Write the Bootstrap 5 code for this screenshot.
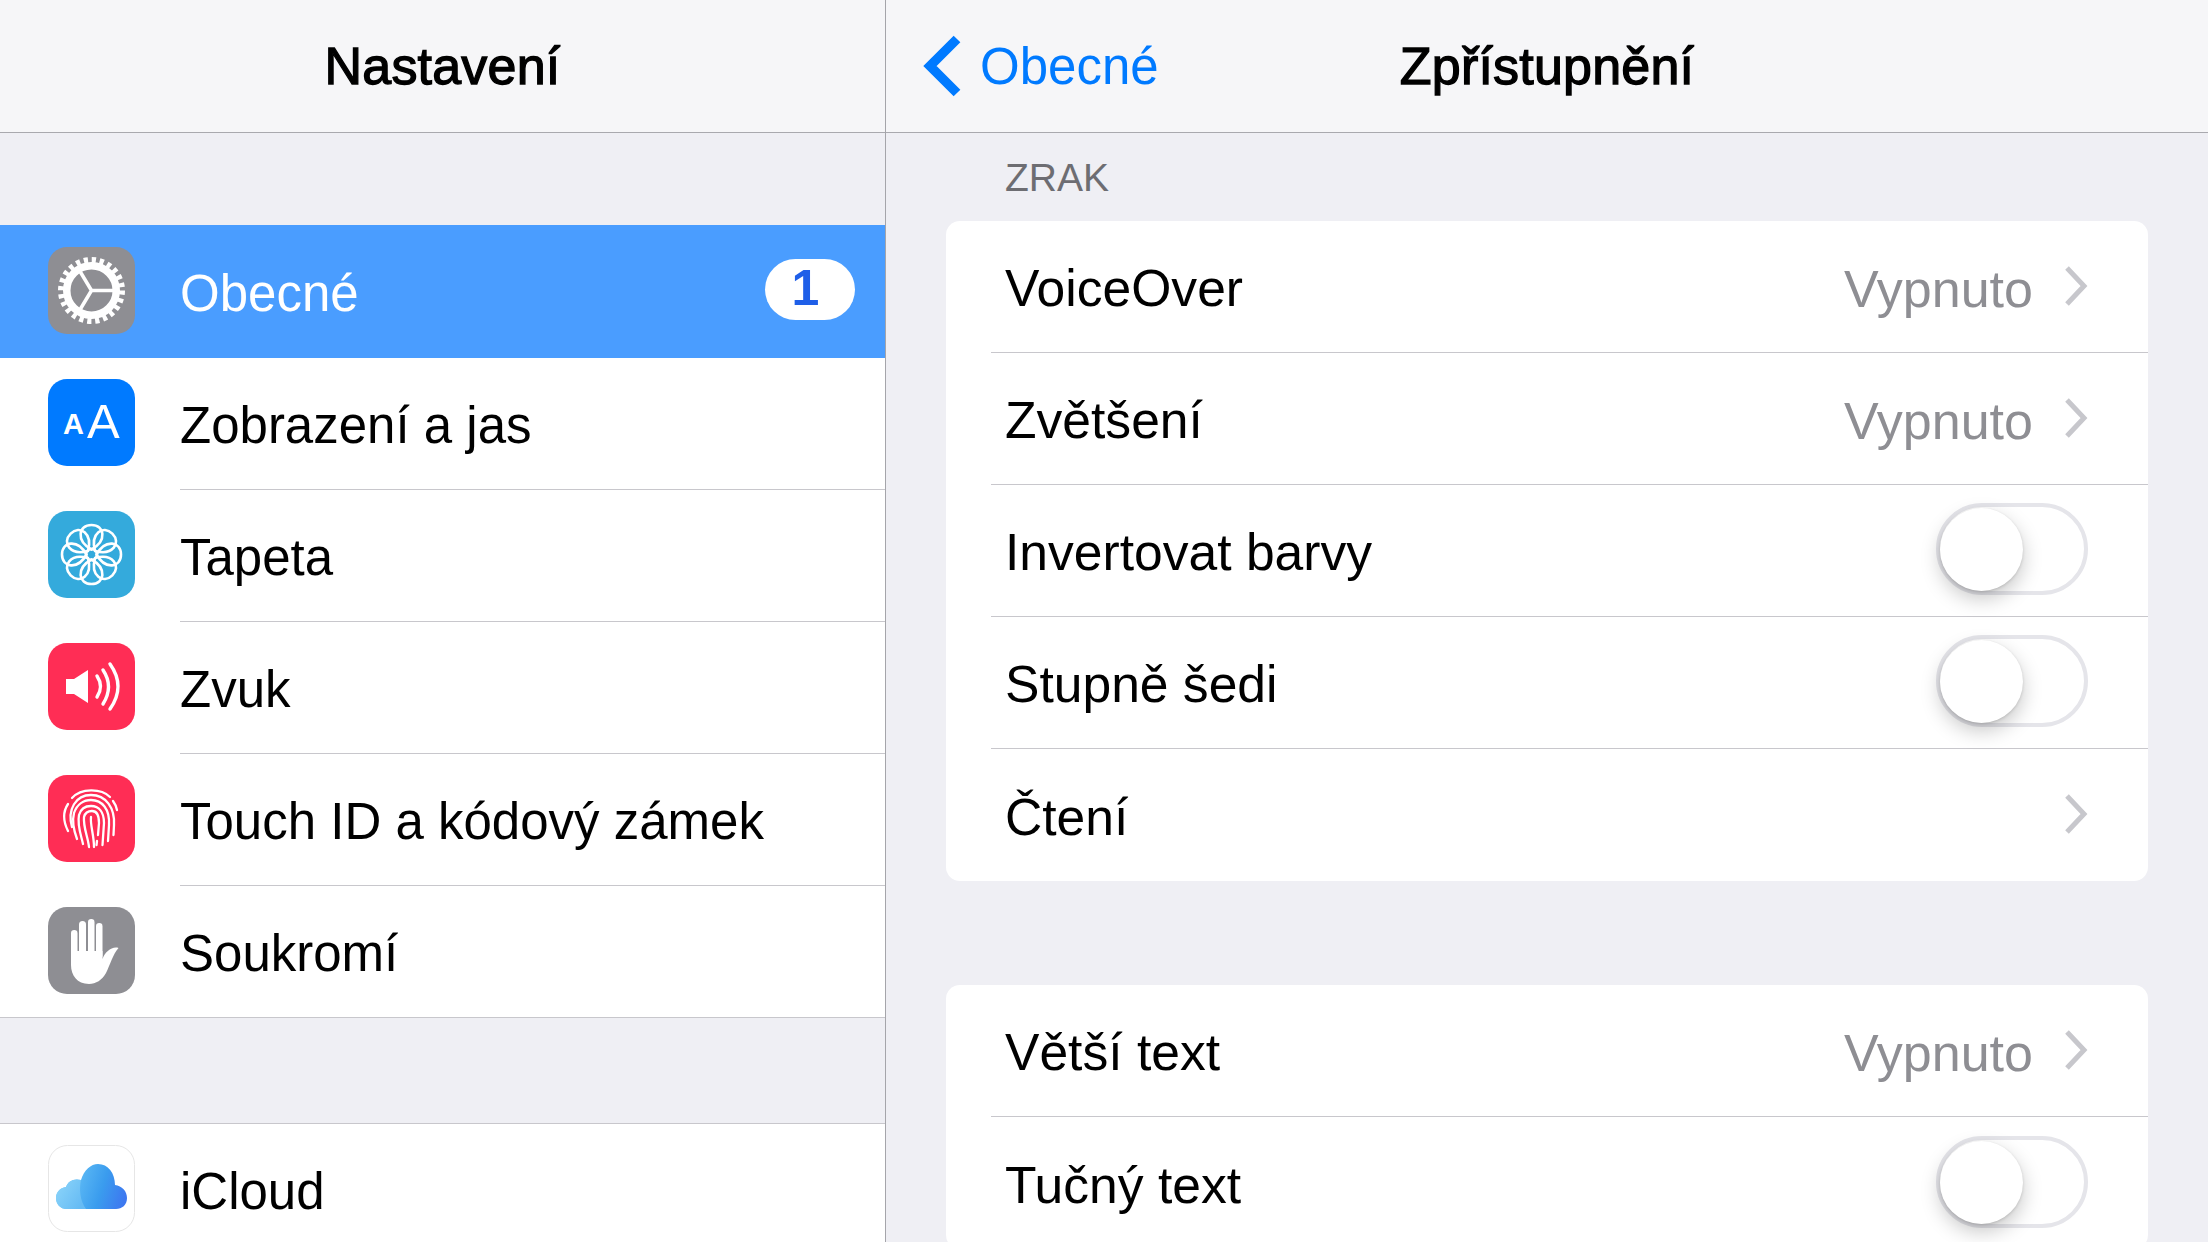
<!DOCTYPE html>
<html lang="cs">
  <head>
    <meta charset="UTF-8" />
    <title>Nastavení</title>
    <link href="https://cdn.jsdelivr.net/npm/bootstrap@5.3.3/dist/css/bootstrap.min.css" rel="stylesheet" />
    <style>
      body {
        background: #efeff4;
        font-family: "Liberation Sans", Arial, sans-serif;
        font-size: 51px;
        color: #000;
      }
      .screen { height: 1242px; overflow: hidden; }
      .side-col { width: 886px; flex: none; border-right: 1px solid #a5a5aa; }
      .main-col { flex: 1 1 auto; min-width: 0; }
      .top-head {
        height: 133px;
        background: #f6f6f8;
        border-bottom: 1px solid #a9a9ae;
        line-height: 1;
      }
      .top-title { font-size: 52px; -webkit-text-stroke: 1.3px #000; letter-spacing: 0.2px; }
      .head-grid { display: grid; grid-template-columns: 1fr auto 1fr; align-items: center; }
      .back-link { color: #007aff; padding-left: 37px; gap: 19px; text-decoration: none; }
      .side-gap-a { height: 92px; }
      .side-gap-b { height: 105px; }
      .side-list { background: #fff; }
      .side-list.edge-top { border-top: 1px solid #c8c7cc; }
      .side-list.edge-bottom { border-bottom: 1px solid #c8c7cc; }
      .side-list.edge-bottom .side-row:last-child { height: 131px; }
      .side-row {
        height: 132px;
        padding-left: 48px;
        gap: 45px;
        background: transparent;
      }
      .side-row .row-text {
        flex: 1 1 auto;
        height: 100%;
        display: flex;
        align-items: center;
        padding-top: 5px;
        border-bottom: 1px solid #c8c7cc;
      }
      .side-row:last-child .row-text { border-bottom: 0; }
      .side-row.row-active { background: #4a9dff; color: #fff; height: 133px; }
      .side-row.row-active .row-text { border-bottom: 0; }
      .app-icon { width: 87px; height: 87px; flex: none; display: block; margin-bottom: 3px; }
      .count-pill {
        position: absolute;
        right: 30px;
        top: 34px;
        width: 90px;
        height: 61px;
        padding-right: 9px;
        background: #fff;
        color: #1f5fe8;
        font-size: 50px;
        font-weight: 700;
        line-height: 59px;
        border-radius: 31px;
        text-align: center;
      }
      .group-label {
        height: 88px;
        padding: 22px 0 0 119px;
        margin: 0;
        font-size: 39px;
        line-height: 45px;
        color: #6d6d72;
      }
      .group-box {
        margin: 0 60px 0 60px;
        background: #fff;
        border-radius: 14px;
      }
      .group-gap { height: 104px; }
      .set-row { height: 132px; padding-left: 45px; }
      .set-inner {
        height: 100%;
        padding: 0 60px 0 14px;
        font-size: 51.6px;
        border-bottom: 1px solid #c8c7cc;
      }
      .set-inner > span { padding-top: 5px; }
      .set-row:last-child .set-inner { border-bottom: 0; }
      .set-value { color: #8e8e93; margin-right: 31px; font-size: 52px; }
      .chev { width: 24px; height: 42px; display: block; flex: none; margin-bottom: 2px; }
      .sw-track {
        width: 152px;
        height: 92px;
        margin-bottom: 3px;
        border: 4px solid #e5e5ea;
        background: #fff;
        position: relative;
      }
      .sw-knob {
        position: absolute;
        left: 0;
        top: 1px;
        width: 83px;
        height: 83px;
        background: #fff;
        box-shadow: 0 8px 20px rgba(0, 0, 0, 0.22), 0 1px 3px rgba(0, 0, 0, 0.15);
      }
    </style>
  </head>
  <body>
    <svg width="0" height="0" class="position-absolute">
      <defs>
        <symbol id="chevron" viewBox="0 0 24 42">
          <path d="M3 3 L20 21 L3 39" fill="none" stroke="#c7c7cc" stroke-width="5" />
        </symbol>
        <linearGradient id="cloudFill" x1="0" y1="0.4" x2="1" y2="0.6">
          <stop offset="0" stop-color="#86d3f9" />
          <stop offset="0.35" stop-color="#55b3f3" />
          <stop offset="0.65" stop-color="#3a9cee" />
          <stop offset="1" stop-color="#3d78f0" />
        </linearGradient>
        <linearGradient id="cloudLobe" x1="0" y1="0" x2="1" y2="0.6">
          <stop offset="0" stop-color="#8ed6fa" />
          <stop offset="1" stop-color="#66bbf4" />
        </linearGradient>
      </defs>
    </svg>

    <div class="screen d-flex">
      <div class="side-col">
        <div class="top-head d-flex align-items-center justify-content-center">
          <span class="top-title">Nastavení</span>
        </div>
        <div class="side-gap-a"></div>

        <div class="side-list edge-bottom list-group list-group-flush">
          <div class="side-row row-active d-flex align-items-center position-relative">
            <svg class="app-icon" viewBox="0 0 87 87">
              <rect width="87" height="87" rx="19" fill="#8e8e93" />
              <circle cx="43.5" cy="43.5" r="30.5" fill="none" stroke="#fff" stroke-width="6" stroke-dasharray="4.2 3.786" />
              <circle cx="43.5" cy="43.5" r="24.75" fill="none" stroke="#fff" stroke-width="7.5" />
              <path d="M43.5 43.5 H68 M43.5 43.5 L30 21 M43.5 43.5 L30 66" fill="none" stroke="#fff" stroke-width="3.5" />
            </svg>
            <div class="row-text">Obecné</div>
            <span class="count-pill">1</span>
          </div>
          <div class="side-row d-flex align-items-center">
            <svg class="app-icon" viewBox="0 0 87 87">
              <rect width="87" height="87" rx="19" fill="#007aff" />
              <text x="15" y="55" font-family="Liberation Sans" font-size="29" font-weight="700" fill="#fff">A</text>
              <text x="39" y="59" font-family="Liberation Sans" font-size="49" fill="#fff">A</text>
            </svg>
            <div class="row-text">Zobrazení a jas</div>
          </div>
          <div class="side-row d-flex align-items-center">
            <svg class="app-icon" viewBox="0 0 87 87">
              <rect width="87" height="87" rx="19" fill="#34aadc" />
              <g transform="translate(43.5 43.5)" fill="none" stroke="#fff" stroke-width="2.6">
                <path d="M0 -5 C-16 -14 -13 -29.5 0 -29.5 C13 -29.5 16 -14 0 -5 Z" />
                <path transform="rotate(45)" d="M0 -5 C-16 -14 -13 -29.5 0 -29.5 C13 -29.5 16 -14 0 -5 Z" />
                <path transform="rotate(90)" d="M0 -5 C-16 -14 -13 -29.5 0 -29.5 C13 -29.5 16 -14 0 -5 Z" />
                <path transform="rotate(135)" d="M0 -5 C-16 -14 -13 -29.5 0 -29.5 C13 -29.5 16 -14 0 -5 Z" />
                <path transform="rotate(180)" d="M0 -5 C-16 -14 -13 -29.5 0 -29.5 C13 -29.5 16 -14 0 -5 Z" />
                <path transform="rotate(225)" d="M0 -5 C-16 -14 -13 -29.5 0 -29.5 C13 -29.5 16 -14 0 -5 Z" />
                <path transform="rotate(270)" d="M0 -5 C-16 -14 -13 -29.5 0 -29.5 C13 -29.5 16 -14 0 -5 Z" />
                <path transform="rotate(315)" d="M0 -5 C-16 -14 -13 -29.5 0 -29.5 C13 -29.5 16 -14 0 -5 Z" />
                <circle r="5.5" />
              </g>
            </svg>
            <div class="row-text">Tapeta</div>
          </div>
          <div class="side-row d-flex align-items-center">
            <svg class="app-icon" viewBox="0 0 87 87">
              <rect width="87" height="87" rx="19" fill="#ff2d55" />
              <polygon points="18,36 26,36 40,27 40,60 26,51 18,51" fill="#fff" />
              <path d="M49 33 Q56 43.5 49 54 M55 27 Q66 43.5 55 61 M62 21 Q78 43.5 62 66" fill="none" stroke="#fff" stroke-width="3.4" stroke-linecap="round" />
            </svg>
            <div class="row-text">Zvuk</div>
          </div>
          <div class="side-row d-flex align-items-center">
            <svg class="app-icon" viewBox="0 0 87 87">
              <rect width="87" height="87" rx="19" fill="#ff2d55" />
              <g fill="none" stroke="#fff" stroke-width="2.3" stroke-linecap="round">
                <path d="M24 23 C33 13 53 13 62 22" />
                <path d="M65 26 Q68 30 69 35" />
                <path d="M20 29 C14 38 16 48 20 56" />
                <path d="M24 52 C19 34 28 20 43 20 C58 20 67 33 66 50 L65.5 60" />
                <path d="M29 64 C26 56 24 46 26 38 C29 29 36 25 43 25 C54 25 62 34 61 50 L60 66" />
                <path d="M35 69 C33 60 29 50 31 40 C33 33 38 31 43 31 C51 31 56 37 56 48 L54.5 70" />
                <path d="M41 72 C40 62 35 52 36 42 C37 38 40 36 44 36 C49 36 51 41 51 48 L50 60" />
                <path d="M43 42 C42 50 46 60 46 72" />
                <path d="M49 66 L48.5 70" />
              </g>
            </svg>
            <div class="row-text">Touch ID a kódový zámek</div>
          </div>
          <div class="side-row d-flex align-items-center">
            <svg class="app-icon" viewBox="0 0 87 87">
              <rect width="87" height="87" rx="19" fill="#8e8e93" />
              <g fill="#fff">
                <rect x="23" y="23" width="6.5" height="30" rx="3.2" />
                <rect x="31" y="14" width="7" height="36" rx="3.5" />
                <rect x="40" y="12" width="6.5" height="38" rx="3.2" />
                <rect x="48" y="16" width="6.5" height="36" rx="3.2" />
                <path d="M23 44 H54.5 V52 C57 45 64 39 70.5 41 C65 47 62 58 58 66 C54 73 48 77 41 77 C29 77 23 68 23 58 Z" />
              </g>
            </svg>
            <div class="row-text">Soukromí</div>
          </div>
        </div>

        <div class="side-gap-b"></div>

        <div class="side-list edge-top list-group list-group-flush">
          <div class="side-row d-flex align-items-center">
            <svg class="app-icon" viewBox="0 0 87 87">
              <rect x="0.5" y="0.5" width="86" height="86" rx="19" fill="#fff" stroke="#e6e6e6" />
              <path d="M19 64 C12 64 8 59 8 53 C8 47 12 43 18 42 C20 36 26 33 33 35 C36 25 43 19 50 19 C60 19 67 28 67 40 C74 41 79 46 79 53 C79 60 74 64 68 64 Z" fill="url(#cloudFill)" />
              <path d="M19 64 C12 64 8 59 8 53 C8 47 12 43 18 42 C20 36 26 33 33 35 C31 44 32 56 38 64 Z" fill="url(#cloudLobe)" />
            </svg>
            <div class="row-text">iCloud</div>
          </div>
        </div>
      </div>

      <div class="main-col">
        <div class="top-head head-grid">
          <a href="#" class="back-link d-flex align-items-center">
            <svg width="38" height="62" viewBox="0 0 38 62">
              <path d="M34 4 L7 31 L34 58" fill="none" stroke="#007aff" stroke-width="9.5" />
            </svg>
            Obecné
          </a>
          <span class="top-title">Zpřístupnění</span>
          <span></span>
        </div>

        <p class="group-label">ZRAK</p>
        <div class="group-box">
          <div class="set-row">
            <div class="set-inner d-flex align-items-center">
              <span class="me-auto">VoiceOver</span>
              <span class="set-value">Vypnuto</span>
              <svg class="chev"><use href="#chevron" /></svg>
            </div>
          </div>
          <div class="set-row">
            <div class="set-inner d-flex align-items-center">
              <span class="me-auto">Zvětšení</span>
              <span class="set-value">Vypnuto</span>
              <svg class="chev"><use href="#chevron" /></svg>
            </div>
          </div>
          <div class="set-row">
            <div class="set-inner d-flex align-items-center">
              <span class="me-auto">Invertovat barvy</span>
              <div class="sw-track rounded-pill"><div class="sw-knob rounded-circle"></div></div>
            </div>
          </div>
          <div class="set-row">
            <div class="set-inner d-flex align-items-center">
              <span class="me-auto">Stupně šedi</span>
              <div class="sw-track rounded-pill"><div class="sw-knob rounded-circle"></div></div>
            </div>
          </div>
          <div class="set-row">
            <div class="set-inner d-flex align-items-center">
              <span class="me-auto">Čtení</span>
              <svg class="chev"><use href="#chevron" /></svg>
            </div>
          </div>
        </div>

        <div class="group-gap"></div>

        <div class="group-box">
          <div class="set-row">
            <div class="set-inner d-flex align-items-center">
              <span class="me-auto">Větší text</span>
              <span class="set-value">Vypnuto</span>
              <svg class="chev"><use href="#chevron" /></svg>
            </div>
          </div>
          <div class="set-row">
            <div class="set-inner d-flex align-items-center">
              <span class="me-auto">Tučný text</span>
              <div class="sw-track rounded-pill"><div class="sw-knob rounded-circle"></div></div>
            </div>
          </div>
        </div>
      </div>
    </div>

    <script src="https://cdn.jsdelivr.net/npm/bootstrap@5.3.3/dist/js/bootstrap.bundle.min.js"></script>
  </body>
</html>
